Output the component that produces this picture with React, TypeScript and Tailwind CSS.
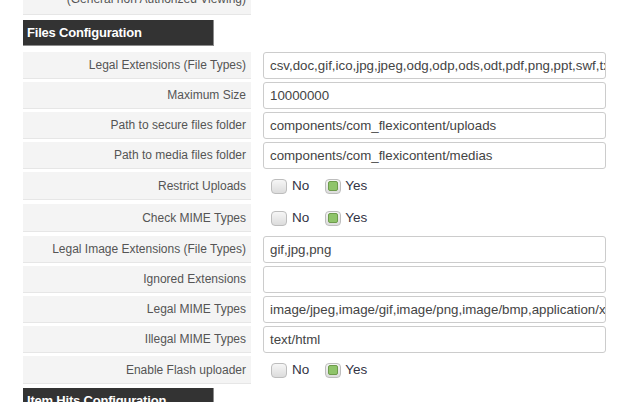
type Row =
  | { label: string; kind: "text"; value: string }
  | { label: string; kind: "radio"; value: "no" | "yes" };

const rows: Row[] = [
  {
    label: "Legal Extensions (File Types)",
    kind: "text",
    value: "csv,doc,gif,ico,jpg,jpeg,odg,odp,ods,odt,pdf,png,ppt,swf,txt,xcf,xls,zip",
  },
  { label: "Maximum Size", kind: "text", value: "10000000" },
  { label: "Path to secure files folder", kind: "text", value: "components/com_flexicontent/uploads" },
  { label: "Path to media files folder", kind: "text", value: "components/com_flexicontent/medias" },
  { label: "Restrict Uploads", kind: "radio", value: "yes" },
  { label: "Check MIME Types", kind: "radio", value: "yes" },
  { label: "Legal Image Extensions (File Types)", kind: "text", value: "gif,jpg,png" },
  { label: "Ignored Extensions", kind: "text", value: "" },
  {
    label: "Legal MIME Types",
    kind: "text",
    value: "image/jpeg,image/gif,image/png,image/bmp,application/x-shockwave-flash",
  },
  { label: "Illegal MIME Types", kind: "text", value: "text/html" },
  { label: "Enable Flash uploader", kind: "radio", value: "yes" },
];

function Check({ on }: { on: boolean }) {
  return (
    <span className="flex h-[15px] w-[16px] items-center justify-center rounded-[4px] border border-[#bdbdbd] bg-gradient-to-b from-[#f6f6f6] to-[#dcdcdc]">
      {on && <span className="h-[10px] w-[10px] rounded-[2px] border border-[#6e9b4c] bg-[#8fc46a]" />}
    </span>
  );
}

function Header({ title }: { title: string }) {
  return (
    <div className="flex h-[26px] w-[191px] items-center border-r border-b border-[#8c8c8c] bg-[#333333] pl-[4px] text-[13px] font-bold tracking-[-0.2px] text-white">
      {title}
    </div>
  );
}

export default function App() {
  return (
    <div className="h-[402px] w-[634px] overflow-hidden bg-white pl-[23px] font-['Liberation_Sans',Arial,sans-serif]">
      {/* previous section tail */}
      <div className="-mt-[14px] flex h-[29px] w-[228px] justify-end border-b border-[#e6e6e6] bg-[#f4f4f4] pt-[6px] pr-[5px] text-[12px] leading-[14px] text-[#555]">
        (General non Authorized Viewing)
      </div>

      <div className="mt-[5px]">
        <Header title="Files Configuration" />
      </div>

      <div className="mt-[6px]">
        {rows.map((r) =>
          r.kind === "text" ? (
            <div key={r.label} className="mb-[3px] flex h-[27px]">
              <div className="flex w-[228px] items-center justify-end border-b border-[#e6e6e6] bg-[#f4f4f4] pr-[5px] text-[12px] text-[#555]">
                {r.label}
              </div>
              <div className="ml-[12px] flex w-[343px] items-center overflow-hidden whitespace-nowrap rounded-[3px] border border-[#cccccc] bg-white px-[6px] text-[13.3px] text-[#444]">
                {r.value}
              </div>
            </div>
          ) : (
            <div key={r.label} className="mb-[4px] flex h-[28px]">
              <div className="flex w-[228px] items-center justify-end border-b border-[#e6e6e6] bg-[#f4f4f4] pr-[5px] text-[12px] text-[#555]">
                {r.label}
              </div>
              <div className="ml-[20px] flex items-center text-[13.5px] text-[#333344]">
                <Check on={r.value === "no"} />
                <span className="ml-[5px]">No</span>
                <span className="ml-[16px]">
                  <Check on={r.value === "yes"} />
                </span>
                <span className="ml-[4px]">Yes</span>
              </div>
            </div>
          )
        )}
      </div>

      <div className="mt-[2px]">
        <Header title="Item Hits Configuration" />
      </div>
    </div>
  );
}
